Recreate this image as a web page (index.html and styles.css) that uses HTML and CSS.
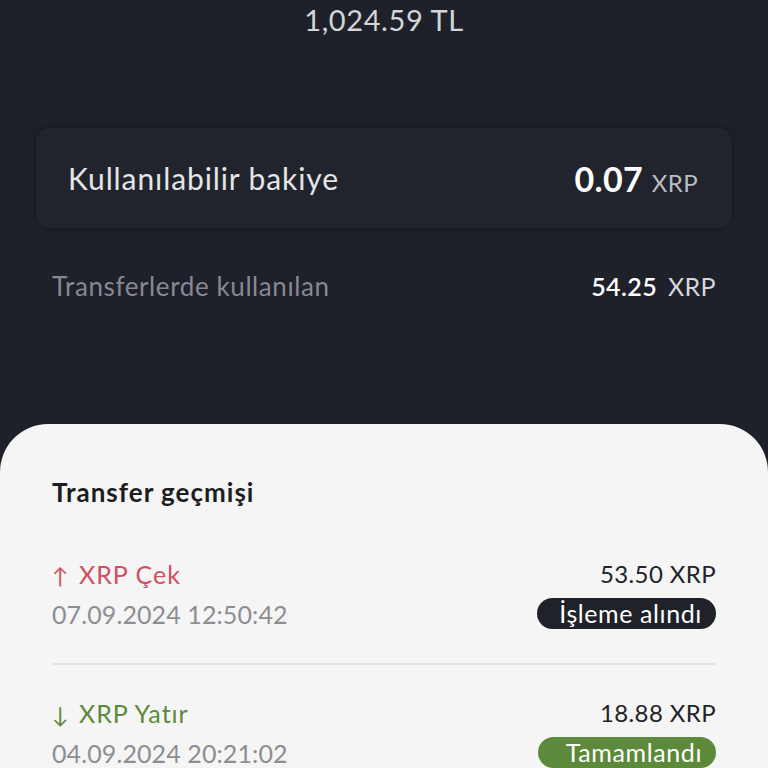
FILE: index.html
```html
<html>
<head>
<title>XRP</title>
<meta name="viewport" content="width=device-width, initial-scale=1.0">
<link rel="stylesheet" href="styles.css">
</head>
<body>
	<div id='top'>
		<p class="fiat">1,024.59 TL</p>

		<div class="balance">
			<span class="label">Kullanılabilir bakiye</span>
			<span class="amount"><b>0.07</b> XRP</span>
		</div>

		<div class="locked">
			<span class="label">Transferlerde kullanılan</span>
			<span class="amount"><b>54.25</b> XRP</span>
		</div>
	</div>

	<div id='sheet'>
		<h4>Transfer geçmişi</h4>

		<div class="transfer">
			<div class="left">
				<p class="type out"><span class="arrow">↑</span> XRP Çek</p>
				<p class="date">07.09.2024 12:50:42</p>
			</div>
			<div class="right">
				<p class="value">53.50 XRP</p>
				<span class="status pending">İşleme alındı</span>
			</div>
		</div>

		<div class="transfer">
			<div class="left">
				<p class="type in"><span class="arrow">↓</span> XRP Yatır</p>
				<p class="date">04.09.2024 20:21:02</p>
			</div>
			<div class="right">
				<p class="value">18.88 XRP</p>
				<span class="status done">Tamamlandı</span>
			</div>
		</div>
	</div>
</body>
</html>
```

FILE: styles.css
```css
body{
	margin:0;padding:0;
	background-color:#1e2129;
	font-family:Lato, "Noto Sans", sans-serif;
	letter-spacing:0.4px;
	height:768px;
	overflow:hidden;
}

p{
	margin:0;
}

	div#top{
		padding:0 36px;
		height:424px;
		box-sizing:border-box;
	}

	p.fiat{
		text-align:center;
		color:#d3d5d9;
		font-size:29px;
		line-height:40px;
		letter-spacing:0.6px;
	}

	div.balance{
		margin-top:88px;
		height:100px;
		display:flex;
		align-items:center;
		justify-content:space-between;
		padding:0 34px 0 32px;
		background-color:#21242c;
		border-radius:14px;
		box-shadow:0 0 6px rgba(0,0,0,0.35);
	}

	div.balance .label{
		color:#e4e5e8;
		font-size:30px;
		letter-spacing:0.9px;
	}

	div.balance .amount{
		color:#b9bcc2;
		font-size:24px;
	}

	div.balance .amount b{
		color:#fff;
		font-size:34px;
		margin-right:2px;
	}

	div.locked{
		display:flex;
		justify-content:space-between;
		align-items:center;
		padding:0 16px;
		margin-top:42px;
	}

	div.locked .label{
		color:#868991;
		font-size:26px;
		letter-spacing:0.6px;
	}

	div.locked .amount{
		color:#d6d8dc;
		font-size:25px;
	}

	div.locked .amount b{
		color:#fff;
		font-weight:600;
		margin-right:4px;
	}

	div#sheet{
		background-color:#f5f5f5;
		border-radius:48px 48px 0 0;
		padding:52px 52px 0 52px;
		height:344px;
		box-sizing:border-box;
	}

	div#sheet h4{
		margin:0 0 50px 0;
		font-size:26px;
		line-height:32px;
		font-weight:700;
		letter-spacing:1px;
		color:#1d1d1f;
	}

	div.transfer{
		display:flex;
		justify-content:space-between;
		padding-bottom:33px;
		border-bottom:2px solid #e3e3e3;
		margin-bottom:32px;
	}

	p.type{
		font-size:25px;
		line-height:32px;
		letter-spacing:1px;
	}

	p.type .arrow{
		font-size:22px;
		margin-right:2px;
	}

	p.type.out{
		color:#d0505f;
	}

	p.type.in{
		color:#5c8a3c;
	}

	p.date{
		font-size:25px;
		line-height:32px;
		margin-top:6px;
		color:#8d8e92;
		letter-spacing:0.1px;
	}

	div.right{
		display:flex;
		flex-direction:column;
		align-items:flex-end;
	}

	p.value{
		font-size:24px;
		line-height:32px;
		color:#222327;
	}

	span.status{
		font-size:25px;
		line-height:31px;
		padding:0 14px 0 22px;
		border-radius:16px;
		color:#fff;
		margin-top:8px;
		letter-spacing:0.6px;
	}

	span.status.pending{
		background-color:#1f2228;
	}

	span.status.done{
		background-color:#5d8a3a;
		padding-left:28px;
	}
```
